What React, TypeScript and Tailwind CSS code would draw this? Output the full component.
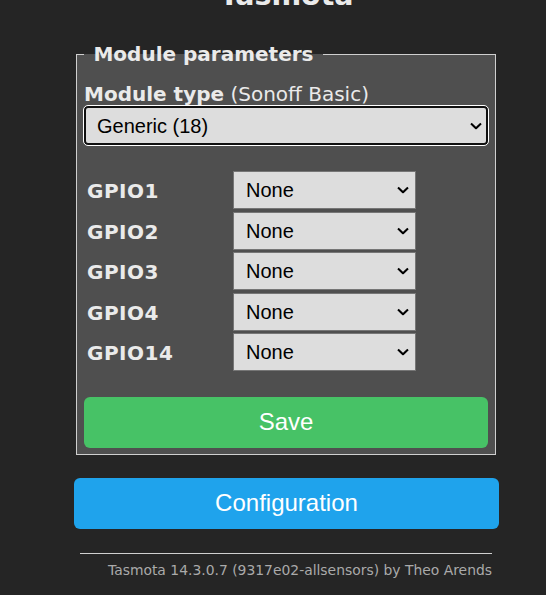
import React from "react";

const Chevron = () => (
  <svg
    className="pointer-events-none absolute right-[7px] top-1/2 -translate-y-1/2"
    width="12"
    height="7"
    viewBox="0 0 12 7"
    fill="none"
  >
    <polyline points="1,1 6,5.8 11,1" stroke="#000" strokeWidth="2" strokeLinejoin="miter" />
  </svg>
);

const GpioRow = ({ label }: { label: string }) => (
  <div className="flex h-[38px] items-center">
    <div className="w-[149px] pl-[3px] pt-[2px] text-[20px] font-bold leading-[24px] tracking-[0.5px]">{label}</div>
    <div className="relative h-[38px] w-[183px]">
      <select
        defaultValue="0"
        className="h-full w-full appearance-none rounded-none border border-[#767676] bg-[#dddddd] pl-[12px] font-['Liberation_Sans',Arial,sans-serif] text-[20px] text-black outline-none"
      >
        <option value="0">None</option>
      </select>
      <Chevron />
    </div>
  </div>
);

export default function App() {
  return (
    <div className="min-h-[595px] w-full overflow-hidden bg-[#252525] font-['DejaVu_Sans',Verdana,sans-serif] text-[#eaeaea]">
      <div className="ml-[74px] w-[425px]">
        <h2 className="mt-[-18px] h-[28px] text-center text-[28.5px] font-bold leading-[28px] text-[#eaeaea]">
          Tasmota
        </h2>
        <fieldset className="ml-[2px] mr-[3px] mt-[32px] border border-[#cfcfcf] bg-[#4f4f4f] px-[7px] pb-[6px]">
          <legend className="px-[2.5px] text-[20px] font-bold leading-[24px]">
            {"\u00a0Module parameters\u00a0"}
          </legend>
          <div className="mt-[17px] text-[20px] leading-[23px]">
            <b>Module type</b> (Sonoff Basic)
          </div>
          <div className="relative h-[39px] w-full">
            <select
              defaultValue="18"
              className="h-full w-full appearance-none rounded-[4px] border-[2.5px] border-[#101010] bg-[#dddddd] pl-[11px] font-['Liberation_Sans',Arial,sans-serif] text-[20px] text-black outline outline-1 outline-white"
            >
              <option value="18">Generic (18)</option>
            </select>
            <svg
              className="pointer-events-none absolute right-[6px] top-1/2 -translate-y-1/2"
              width="12"
              height="7"
              viewBox="0 0 12 7"
              fill="none"
            >
              <polyline points="1,1 6,5.8 11,1" stroke="#000" strokeWidth="2" />
            </svg>
          </div>
          <div className="mt-[26px] flex flex-col gap-[2.6px]">
            <GpioRow label="GPIO1" />
            <GpioRow label="GPIO2" />
            <GpioRow label="GPIO3" />
            <GpioRow label="GPIO4" />
            <GpioRow label="GPIO14" />
          </div>
          <button className="mt-[25.6px] h-[51px] w-full rounded-[6px] bg-[#47c266] font-['Liberation_Sans',Arial,sans-serif] text-[24px] text-white">
            Save
          </button>
        </fieldset>
        <button className="mt-[23px] h-[51px] w-full rounded-[6px] bg-[#1fa3ec] font-['Liberation_Sans',Arial,sans-serif] text-[24px] text-white">
          Configuration
        </button>
        <div className="ml-[6px] mr-[7px] mt-[24px]">
          <div className="border-t border-[#d0d0d0]" />
          <div className="mt-[8px] text-right text-[13.9px] leading-[16px] text-[#aaaaaa]">
            Tasmota 14.3.0.7 (9317e02-allsensors) by Theo Arends
          </div>
        </div>
      </div>
    </div>
  );
}
